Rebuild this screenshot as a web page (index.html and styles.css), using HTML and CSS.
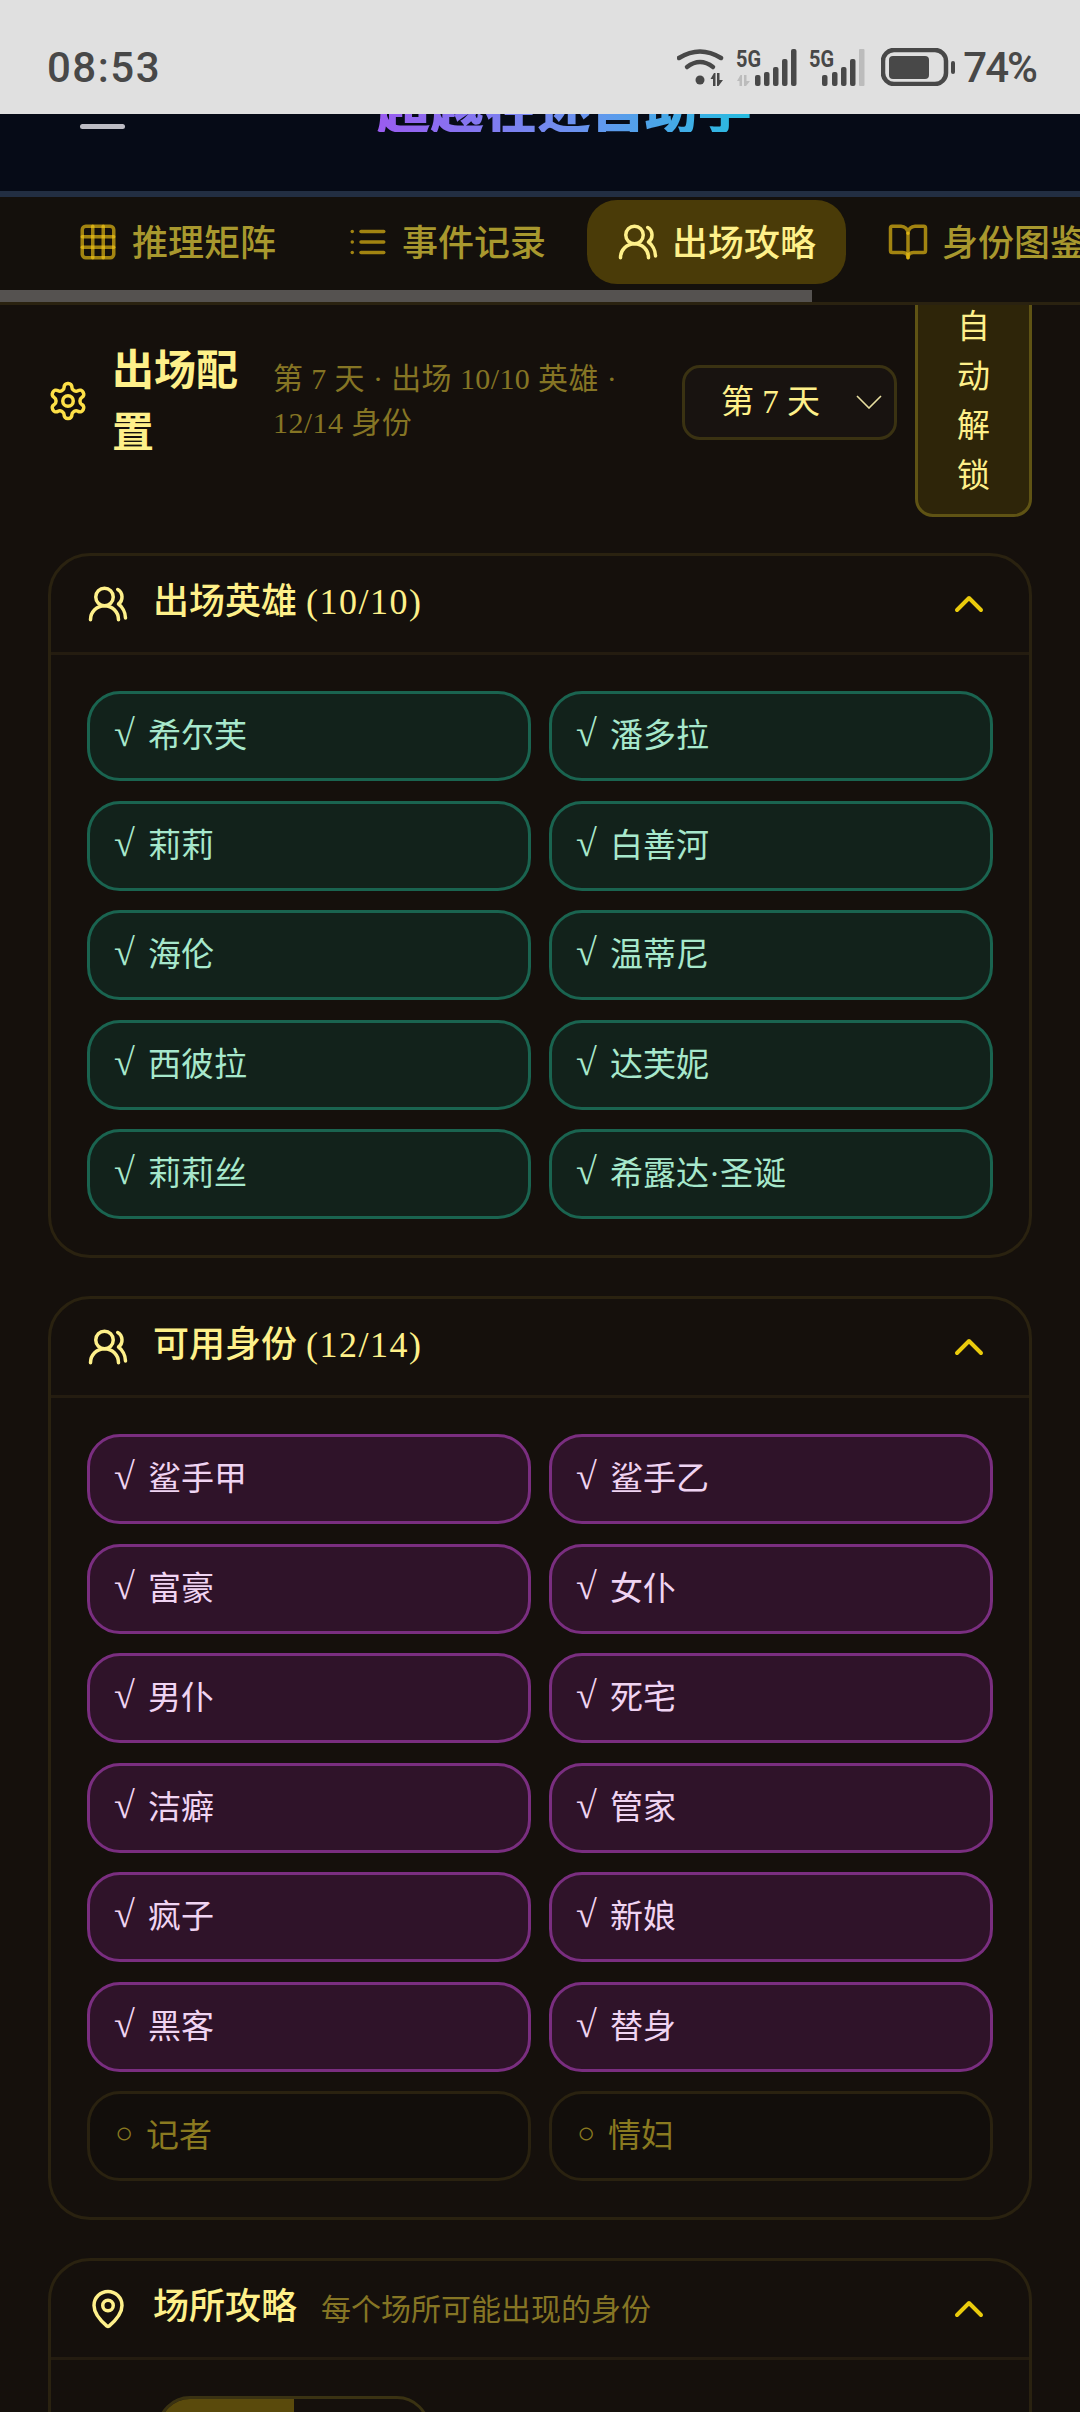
FILE: index.html
```html
<!DOCTYPE html>
<html lang="zh-CN">
<head>
    <meta charset="UTF-8">
    <meta name="viewport" content="width=device-width, initial-scale=1.0">
    <title>出场攻略</title>
    <link rel="stylesheet" href="styles.css">
</head>
<body>

    <!-- Status bar -->
    <div class="statusbar">
        <span class="clock">08:53</span>
        <div class="status-icons">
            <svg class="st-wifi" width="48" height="38" viewBox="0 0 48 38">
                <path class="st-line" d="M2 10Q23-3 44 10"/>
                <path class="st-line" d="M10 19Q23 9 36 19"/>
                <circle class="st-fill" cx="23" cy="32" r="4.5"/>
                <path class="st-fill" d="M33.5 31l3.5-6h1.5v13H36v-7zM40 25h2.500v7H46l-4.500 6H40z"/>
            </svg>
            <svg class="st-sig" width="62" height="38" viewBox="0 0 62 38">
                <text class="st-5g" x="0" y="19" textLength="25" lengthAdjust="spacingAndGlyphs">5G</text>
                <path class="st-grey" d="M1 33l3.500-6H6v11H3.500v-5zM8 27h2.500v6H14l-4 5H8z"/>
                <rect class="st-fill" x="19" y="27" width="5.5" height="11" rx="2"/>
                <rect class="st-fill" x="28" y="24" width="5.5" height="14" rx="2"/>
                <rect class="st-fill" x="37" y="19" width="5.5" height="19" rx="2"/>
                <rect class="st-fill" x="46" y="11" width="5.5" height="27" rx="2"/>
                <rect class="st-fill" x="55" y="1" width="5.5" height="37" rx="2"/>
            </svg>
            <svg class="st-sig2" width="56" height="38" viewBox="0 0 56 38">
                <text class="st-5g" x="0" y="19" textLength="25" lengthAdjust="spacingAndGlyphs">5G</text>
                <rect class="st-fill" x="13" y="27" width="5.5" height="11" rx="2"/>
                <rect class="st-fill" x="23" y="24" width="5.5" height="14" rx="2"/>
                <rect class="st-fill" x="32" y="19" width="5.5" height="19" rx="2"/>
                <rect class="st-fill" x="41" y="11" width="5.5" height="27" rx="2"/>
                <rect class="st-grey" x="50" y="1" width="5.5" height="37" rx="1"/>
            </svg>
            <svg class="st-batt" width="75" height="38" viewBox="0 0 75 38">
                <rect class="st-line" x="2" y="2" width="63" height="34" rx="11"/>
                <rect class="st-fill" x="8" y="8" width="40" height="23" rx="4"/>
                <rect class="st-fill" x="70" y="13" width="4" height="13" rx="2"/>
            </svg>
            <span class="batt-pct">74%</span>
        </div>
    </div>

    <!-- App header, scrolled mostly under the status bar -->
    <div class="topbar">
        <div class="menu-btn"><span></span><span></span><span></span></div>
        <div class="app-title">超越在述自助手</div>
    </div>

    <!-- Tabs -->
    <div class="tabs">
        <div class="tab-row">
            <div class="tab">
                <svg class="ic ic-soft" viewBox="0 0 24 24"><rect x="3" y="3" width="18" height="18" rx="2"/><path d="M3 9h18"/><path d="M3 15h18"/><path d="M9 3v18"/><path d="M15 3v18"/></svg>
                <span>推理矩阵</span>
            </div>
            <div class="tab">
                <svg class="ic ic-soft" viewBox="0 0 24 24"><path d="M3 12h.01"/><path d="M3 18h.01"/><path d="M3 6h.01"/><path d="M8 12h13"/><path d="M8 18h13"/><path d="M8 6h13"/></svg>
                <span>事件记录</span>
            </div>
            <div class="tab tab-active">
                <svg class="ic" viewBox="0 0 24 24"><path d="M18 21a8 8 0 0 0-16 0"/><circle cx="10" cy="8" r="5"/><path d="M22 20c0-3.37-2-6.5-4-8a5 5 0 0 0-.45-8.3"/></svg>
                <span>出场攻略</span>
            </div>
            <div class="tab">
                <svg class="ic ic-soft" viewBox="0 0 24 24"><path d="M12 7v14"/><path d="M3 18a1 1 0 0 1-1-1V4a1 1 0 0 1 1-1h5a4 4 0 0 1 4 4 4 4 0 0 1 4-4h5a1 1 0 0 1 1 1v13a1 1 0 0 1-1 1h-6a3 3 0 0 0-3 3 3 3 0 0 0-3-3z"/></svg>
                <span>身份图鉴</span>
            </div>
        </div>
        <div class="tab-scroll"><div class="tab-thumb"></div></div>
    </div>

    <!-- Config row -->
    <div class="config">
        <svg class="gear" viewBox="0 0 24 24"><path d="M12.22 2h-.44a2 2 0 0 0-2 2v.18a2 2 0 0 1-1 1.73l-.43.25a2 2 0 0 1-2 0l-.15-.08a2 2 0 0 0-2.73.73l-.22.38a2 2 0 0 0 .73 2.73l.15.1a2 2 0 0 1 1 1.72v.51a2 2 0 0 1-1 1.74l-.15.09a2 2 0 0 0-.73 2.73l.22.38a2 2 0 0 0 2.73.73l.15-.08a2 2 0 0 1 2 0l.43.25a2 2 0 0 1 1 1.73V20a2 2 0 0 0 2 2h.44a2 2 0 0 0 2-2v-.18a2 2 0 0 1 1-1.73l.43-.25a2 2 0 0 1 2 0l.15.08a2 2 0 0 0 2.73-.73l.22-.39a2 2 0 0 0-.73-2.73l-.15-.08a2 2 0 0 1-1-1.74v-.5a2 2 0 0 1 1-1.74l.15-.09a2 2 0 0 0 .73-2.73l-.22-.38a2 2 0 0 0-2.73-.73l-.15.08a2 2 0 0 1-2 0l-.43-.25a2 2 0 0 1-1-1.73V4a2 2 0 0 0-2-2z"/><circle cx="12" cy="12" r="3"/></svg>
        <h1 class="config-title">出场配置</h1>
        <p class="config-sub">第 7 天 · 出场 10/10 英雄 · 12/14 身份</p>
        <div class="day-select">
            <span>第 7 天</span>
            <svg class="day-arrow" viewBox="0 0 26 14"><path d="M1 1l12 12L25 1"/></svg>
        </div>
        <div class="auto-btn">自动解锁</div>
    </div>

    <!-- Heroes -->
    <div class="card">
        <div class="card-head">
            <svg class="ic" viewBox="0 0 24 24"><path d="M18 21a8 8 0 0 0-16 0"/><circle cx="10" cy="8" r="5"/><path d="M22 20c0-3.37-2-6.5-4-8a5 5 0 0 0-.45-8.3"/></svg>
            <h2>出场英雄 <span class="num">(10/10)</span></h2>
            <svg class="chev" viewBox="0 0 24 24"><path d="m18 15-6-6-6 6"/></svg>
        </div>
        <div class="chips">
            <div class="chip chip-green"><span class="tick">√</span>希尔芙</div>
            <div class="chip chip-green"><span class="tick">√</span>潘多拉</div>
            <div class="chip chip-green"><span class="tick">√</span>莉莉</div>
            <div class="chip chip-green"><span class="tick">√</span>白善河</div>
            <div class="chip chip-green"><span class="tick">√</span>海伦</div>
            <div class="chip chip-green"><span class="tick">√</span>温蒂尼</div>
            <div class="chip chip-green"><span class="tick">√</span>西彼拉</div>
            <div class="chip chip-green"><span class="tick">√</span>达芙妮</div>
            <div class="chip chip-green"><span class="tick">√</span>莉莉丝</div>
            <div class="chip chip-green"><span class="tick">√</span>希露达·圣诞</div>
        </div>
    </div>

    <!-- Identities -->
    <div class="card">
        <div class="card-head">
            <svg class="ic" viewBox="0 0 24 24"><path d="M18 21a8 8 0 0 0-16 0"/><circle cx="10" cy="8" r="5"/><path d="M22 20c0-3.37-2-6.5-4-8a5 5 0 0 0-.45-8.3"/></svg>
            <h2>可用身份 <span class="num">(12/14)</span></h2>
            <svg class="chev" viewBox="0 0 24 24"><path d="m18 15-6-6-6 6"/></svg>
        </div>
        <div class="chips">
            <div class="chip chip-purple"><span class="tick">√</span>鲨手甲</div>
            <div class="chip chip-purple"><span class="tick">√</span>鲨手乙</div>
            <div class="chip chip-purple"><span class="tick">√</span>富豪</div>
            <div class="chip chip-purple"><span class="tick">√</span>女仆</div>
            <div class="chip chip-purple"><span class="tick">√</span>男仆</div>
            <div class="chip chip-purple"><span class="tick">√</span>死宅</div>
            <div class="chip chip-purple"><span class="tick">√</span>洁癖</div>
            <div class="chip chip-purple"><span class="tick">√</span>管家</div>
            <div class="chip chip-purple"><span class="tick">√</span>疯子</div>
            <div class="chip chip-purple"><span class="tick">√</span>新娘</div>
            <div class="chip chip-purple"><span class="tick">√</span>黑客</div>
            <div class="chip chip-purple"><span class="tick">√</span>替身</div>
            <div class="chip chip-off"><span class="dot">○</span>记者</div>
            <div class="chip chip-off"><span class="dot">○</span>情妇</div>
        </div>
    </div>

    <!-- Places -->
    <div class="card">
        <div class="card-head">
            <svg class="ic" viewBox="0 0 24 24"><path d="M20 10c0 4.993-5.539 10.193-7.399 11.799a1 1 0 0 1-1.202 0C9.539 20.193 4 14.993 4 10a8 8 0 0 1 16 0"/><circle cx="12" cy="10" r="3"/></svg>
            <h2>场所攻略</h2>
            <span class="head-note">每个场所可能出现的身份</span>
            <svg class="chev" viewBox="0 0 24 24"><path d="m18 15-6-6-6 6"/></svg>
        </div>
        <div class="places">
            <div class="place-tabs">
                <div class="place-on"></div>
                <div class="place-off"></div>
            </div>
        </div>
    </div>

</body>
</html>
```

FILE: styles.css
```css
html, body {
    height: 2412px;
    overflow: hidden;
}
body {
    margin: 0;
    background-color: #15100c;
    color: #fef08a;
    font-family: "Liberation Serif", "Noto Sans CJK SC", serif;
}
h1, h2, p {
    margin: 0;
}
/* Status bar */
.statusbar {
    height: 114px;
    background-color: #e0e0e0;
    display: flex;
    align-items: center;
    justify-content: space-between;
    padding: 20px 44px 0 47px;
    box-sizing: border-box;
    position: relative;
    z-index: 3;
}
.clock, .batt-pct {
    font-family: Roboto, sans-serif;
    font-weight: 500;
    color: #484848;
    font-size: 42px;
}
.clock {
    letter-spacing: 1.5px;
}
.status-icons {
    display: flex;
    align-items: center;
    gap: 11px;
}
.status-icons svg {
    display: block;
}
.st-batt {
    margin-left: 5px;
}
.batt-pct {
    letter-spacing: -2px;
    margin-left: -4px;
}
.st-line {
    fill: none;
    stroke: #484848;
    stroke-width: 4.5;
    stroke-linecap: round;
}
.st-fill {
    fill: #484848;
}
.st-grey {
    fill: #bcbcbc;
}
.st-5g {
    font-family: Roboto, sans-serif;
    font-weight: 700;
    font-size: 23px;
    fill: #484848;
}
/* Top bar */
.topbar {
    height: 83px;
    background-color: #060b17;
    border-bottom: 6px solid #222e42;
    overflow: hidden;
    display: flex;
    align-items: flex-end;
    padding: 0 0 62px 80px;
    box-sizing: border-box;
}
.menu-btn {
    flex: 0 0 45px;
    display: flex;
    flex-direction: column;
    gap: 12px;
}
.menu-btn span {
    height: 5px;
    border-radius: 3px;
    background-color: #bcbcc4;
}
.app-title {
    margin-left: 252px;
    margin-bottom: -3px;
    font-family: "Noto Sans CJK SC", sans-serif;
    font-weight: 900;
    font-size: 53.5px;
    line-height: 1;
    white-space: nowrap;
    background: linear-gradient(90deg, #9a5cf0, #6f8ff0 50%, #25bde0);
    -webkit-background-clip: text;
    background-clip: text;
    color: transparent;
}
/* Tabs */
.tabs {
    background-color: #14100c;
    border-bottom: 3px solid #2a2210;
    overflow: hidden;
    position: relative;
    z-index: 2;
}
.tab-row {
    display: flex;
    gap: 11px;
    padding: 3px 0 6px 47px;
    width: 1400px;
}
.tab {
    display: flex;
    align-items: center;
    gap: 13px;
    height: 84px;
    padding: 0 30px;
    border-radius: 30px;
    font-family: "Noto Sans CJK SC", sans-serif;
    font-size: 36px;
    font-weight: 500;
    color: #a8982e;
}
.tab span {
    line-height: 48px;
    margin-top: -5px;
}
.tab-active {
    background-color: #4a3b08;
    color: #fef08a;
}
.tab-scroll {
    height: 12px;
}
.tab-thumb {
    width: 812px;
    height: 12px;
    background-color: #555250;
}
/* Lucide style icons */
.ic {
    flex: none;
    width: 42px;
    height: 42px;
    fill: none;
    stroke: #fef08a;
    stroke-width: 2;
    stroke-linecap: round;
    stroke-linejoin: round;
}
.ic-soft {
    stroke: #facc15;
    stroke-opacity: 0.62;
}
.chev {
    flex: none;
    width: 48px;
    height: 48px;
    margin-left: auto;
    fill: none;
    stroke: #eacb0c;
    stroke-width: 2;
    stroke-linecap: round;
    stroke-linejoin: round;
}
/* Config row */
.config {
    display: flex;
    align-items: center;
    margin-top: -21px;
    padding: 0 48px 0 47px;
}
.gear {
    flex: none;
    width: 42px;
    height: 42px;
    fill: none;
    stroke: #fde047;
    stroke-width: 2;
    stroke-linecap: round;
    stroke-linejoin: round;
}
.config-title {
    flex: 0 0 130px;
    margin: -6px 0 0 23px;
    font-family: "Noto Sans CJK SC", sans-serif;
    font-size: 42px;
    line-height: 62px;
    font-weight: 700;
}
.config-sub {
    flex: 1;
    margin-left: 31px;
    padding-right: 20px;
    font-size: 30px;
    line-height: 44px;
    letter-spacing: 0.4px;
    color: #857524;
}
.day-select {
    flex: none;
    width: 215px;
    height: 75px;
    box-sizing: border-box;
    display: flex;
    align-items: center;
    justify-content: space-between;
    margin-top: 3px;
    padding: 0 12px 0 36px;
    border: 3px solid #3a3212;
    border-radius: 18px;
    background-color: #181310;
    font-size: 33px;
}
.day-select span {
    margin-top: -7px;
}
.day-arrow {
    width: 26px;
    height: 14px;
    fill: none;
    stroke: #e8dfa0;
    stroke-width: 1.6;
}
.auto-btn {
    flex: none;
    width: 117px;
    box-sizing: border-box;
    margin-left: 18px;
    padding: 16px 33px 13px;
    text-align: center;
    font-size: 33px;
    line-height: 49.5px;
    border: 3px solid #5f5314;
    border-radius: 18px;
    background-color: #2e2509;
}
/* Cards */
.card {
    margin: 36px 48px 38px;
    border: 3px solid #2a2210;
    border-radius: 42px;
}
.card + .card {
    margin-top: 0;
}
.card-head {
    display: flex;
    align-items: center;
    height: 96px;
    padding: 0 36px;
    border-bottom: 3px solid #241c10;
}
.card-head h2 {
    margin: -4px 0 0 24px;
    font-size: 36px;
    font-weight: 500;
    line-height: 54px;
}
.num {
    letter-spacing: 1.5px;
}
.head-note {
    margin: -4px 0 0 24px;
    font-size: 30px;
    color: #857524;
}
.chips {
    display: grid;
    grid-template-columns: 1fr 1fr;
    gap: 19.5px 18px;
    padding: 36px;
}
.chip {
    box-sizing: border-box;
    height: 90px;
    display: flex;
    align-items: center;
    padding: 0 0 6px 24px;
    border: 3px solid;
    border-radius: 33px;
    font-size: 33px;
}
.chip-green {
    background-color: #12221b;
    border-color: #1a6450;
    color: #a7e8cc;
}
.chip-purple {
    background-color: #2f1329;
    border-color: #7a2e80;
    color: #f0d4f2;
}
.chip-off {
    background-color: #120e0b;
    border-color: #2a2210;
    color: #8a7a20;
}
.tick {
    flex: 0 0 34px;
    font-size: 38px;
    line-height: 1;
    font-weight: 400;
}
.dot {
    flex: 0 0 31px;
    font-size: 30px;
    margin-left: 1px;
}
/* Places */
.places {
    padding: 36px 36px 300px 106px;
}
.place-tabs {
    display: flex;
    width: 273px;
    height: 90px;
    box-sizing: border-box;
    border: 3px solid #3a3212;
    border-radius: 33px;
    overflow: hidden;
}
.place-on {
    flex: 0 0 134px;
    background-color: #5a4a0c;
}
.place-off {
    flex: 1;
}
```
